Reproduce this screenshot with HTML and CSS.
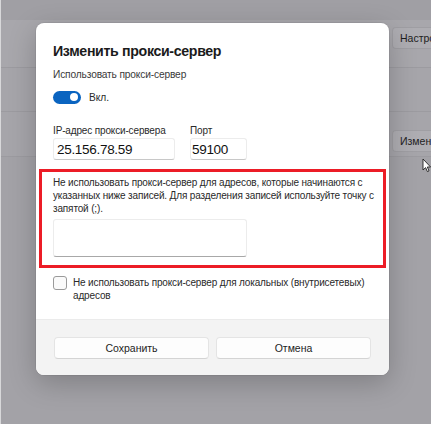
FILE: index.html
```html
<!DOCTYPE html>
<html lang="ru">
	<head>
		<meta charset="utf-8">
		<title>Изменить прокси-сервер</title>
		<link rel="stylesheet" href="styles.css">
	</head>
	<body>
		<div class="screen">
			<div class="backdrop">
				<div class="strip"></div>
				<div class="row row-first"><span class="bg-button">Настро</span></div>
				<div class="row row-empty"></div>
				<div class="row row-second"><span class="bg-button">Измен</span></div>
				<div class="rest"></div>
			</div>

			<div class="dialog">
				<div class="dialog-body">
					<h1 class="title">Изменить прокси-сервер</h1>
					<p class="label">Использовать прокси-сервер</p>
					<div class="toggle-row">
						<span class="toggle"><span class="knob"></span></span>
						<span class="toggle-text">Вкл.</span>
					</div>
					<div class="fields">
						<div class="field">
							<span class="field-label">IP-адрес прокси-сервера</span>
							<div class="input input-ip">25.156.78.59</div>
						</div>
						<div class="field">
							<span class="field-label">Порт</span>
							<div class="input input-port">59100</div>
						</div>
					</div>
					<div class="marked">
						<p class="hint">Не использовать прокси-сервер для адресов, которые начинаются с указанных ниже записей. Для разделения записей используйте точку с запятой (;).</p>
						<div class="textarea"></div>
					</div>
					<div class="check-row">
						<span class="checkbox"></span>
						<span class="check-text">Не использовать прокси-сервер для локальных (внутрисетевых) адресов</span>
					</div>
				</div>
				<div class="dialog-footer">
					<button class="btn">Сохранить</button>
					<button class="btn">Отмена</button>
				</div>
			</div>

			<svg class="cursor" width="10" height="15" viewBox="0 0 10 15">
				<path d="M1 1 L1 12 L3.6 9.6 L5.4 13.6 L7 12.9 L5.3 9 L8.6 9 Z" fill="#ffffff" stroke="#222222" stroke-width="0.9"/>
			</svg>
		</div>
	</body>
</html>
```

FILE: styles.css
```css
body{
	margin: 0;
	background: #a4a3a8;
	font-family: "Liberation Sans", Arial, sans-serif;
}
.screen{
	position: relative;
	width: 431px;
	height: 424px;
	overflow: hidden;
	background: #a3a2a7;
	border-left: 1px solid #d8d8da;
	box-sizing: border-box;
}
.backdrop{
	display: flex;
	flex-direction: column;
	height: 100%;
}
.strip{
	height: 20px;
	background: #a09fa4;
}
.row{
	display: flex;
	align-items: center;
	border-bottom: 1px solid #9c9ba0;
	background: #a8a7ac;
}
.row-first{
	height: 47px;
}
.row-empty{
	height: 43px;
	background: #a6a5aa;
}
.row-second{
	height: 44px;
	background: #a6a5aa;
}
.rest{
	flex: 1;
	background: #a3a2a7;
}
.bg-button{
	margin-left: 391px;
	padding: 4px 0 4px 7px;
	width: 40px;
	background: #aeadb2;
	border: 1px solid #9f9ea3;
	border-right: none;
	border-radius: 4px 0 0 4px;
	font-size: 10.5px;
	color: #1e1e1e;
	white-space: nowrap;
}
.row-first .bg-button{
	margin-top: -12px;
}
.row-second .bg-button{
	margin-top: 14px;
}
.cursor{
	position: absolute;
	left: 421px;
	top: 158px;
}

.dialog{
	position: absolute;
	left: 35px;
	top: 23px;
	width: 353px;
	height: 352px;
	background: #ffffff;
	border-radius: 8px;
	box-shadow: 0 8px 28px rgba(0, 0, 0, 0.22), 0 0 0 1px rgba(0, 0, 0, 0.05);
	display: flex;
	flex-direction: column;
	overflow: hidden;
}
.dialog-body{
	flex: 1;
	padding: 19px 17px 0 17px;
}
.title{
	margin: 0;
	font-size: 14.2px;
	font-weight: 600;
	letter-spacing: -0.35px;
	line-height: 19px;
	color: #1b1b1b;
}
.label{
	margin: 7px 0 0 0;
	font-size: 10.2px;
	letter-spacing: -0.15px;
	line-height: 14px;
	color: #3a3a3a;
}
.toggle-row{
	display: flex;
	align-items: center;
	margin-top: 8px;
	height: 14px;
}
.toggle{
	display: flex;
	align-items: center;
	justify-content: flex-end;
	width: 28px;
	height: 13px;
	border-radius: 7px;
	background: #0a64c0;
	box-sizing: border-box;
	padding-right: 3px;
}
.knob{
	width: 8px;
	height: 8px;
	border-radius: 50%;
	background: #ffffff;
}
.toggle-text{
	margin-left: 8px;
	font-size: 10.2px;
	color: #2a2a2a;
}
.fields{
	display: flex;
	gap: 15px;
	margin-top: 20px;
}
.field{
	display: flex;
	flex-direction: column;
}
.field-label{
	font-size: 10px;
	letter-spacing: -0.15px;
	line-height: 14px;
	color: #2a2a2a;
}
.input{
	height: 22px;
	box-sizing: border-box;
	border: 1px solid #ececec;
	border-bottom-color: #c8c8c8;
	border-radius: 3px;
	padding: 1px 3px 0 3px;
	font-size: 13.5px;
	letter-spacing: -0.3px;
	line-height: 19px;
	color: #111111;
}
.input-ip{
	width: 122px;
}
.input-port{
	width: 57px;
	padding-left: 1px;
}
.marked{
	margin: 9px -14px 0 -14px;
	border: 3px solid #ec1c26;
	padding: 4px 5px 8px 11px;
}
.hint{
	margin: 0;
	font-size: 10px;
	letter-spacing: -0.15px;
	line-height: 13px;
	color: #2a2a2a;
}
.textarea{
	margin-top: 4px;
	width: 194px;
	height: 38px;
	box-sizing: border-box;
	border: 1px solid #ececec;
	border-bottom-color: #a8a8a8;
	border-radius: 3px;
}
.check-row{
	display: flex;
	align-items: flex-start;
	margin-top: 8px;
}
.checkbox{
	flex: none;
	width: 14px;
	height: 14px;
	box-sizing: border-box;
	border: 1px solid #9a9a9a;
	border-radius: 3px;
	background: #fafafa;
}
.check-text{
	margin-left: 6px;
	font-size: 10px;
	letter-spacing: -0.15px;
	line-height: 13px;
	color: #2a2a2a;
	width: 300px;
}
.dialog-footer{
	height: 56px;
	box-sizing: border-box;
	background: #f3f3f3;
	border-top: 1px solid #ebebeb;
	display: flex;
	gap: 7px;
	padding: 17px 18px 0 18px;
}
.btn{
	flex: 1;
	height: 22px;
	background: #fdfdfd;
	border: 1px solid #e4e4e4;
	border-bottom-color: #d4d4d4;
	border-radius: 4px;
	font-family: "Liberation Sans", Arial, sans-serif;
	font-size: 10.5px;
	color: #1e1e1e;
	padding: 0;
}
```
